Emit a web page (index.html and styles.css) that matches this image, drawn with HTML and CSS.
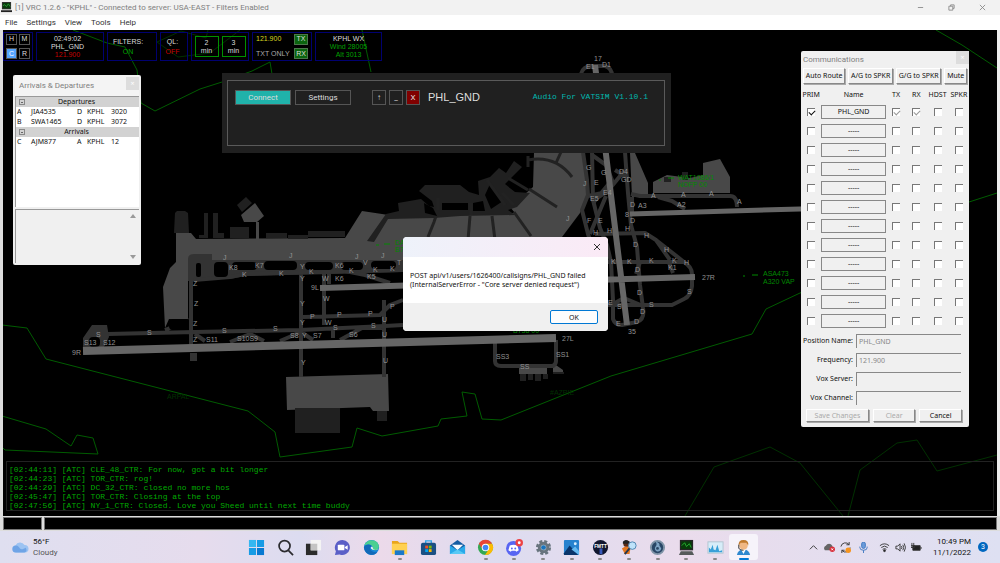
FILE: index.html
```html
<!DOCTYPE html>
<html lang="en">
<head>
<meta charset="utf-8">
<title>VRC 1.2.6</title>
<link rel="stylesheet" href="styles.css">
</head>
<body>
<div class="app">
<header class="titlebar">
  <svg class="app-icon" viewBox="0 0 12 12"><rect x="1" width="10" height="8" fill="#333"/><rect x="2" y="1" width="8" height="6" fill="#063b0b"/><path d="M2 4l2-1 2 2 2-3 2 3" stroke="#2a9a35" fill="none"/><path d="M0 9h12v2H0z" fill="#222"/></svg>
  <span class="title">[1] VRC 1.2.6 - "KPHL" - Connected to server: USA-EAST - Filters Enabled</span>
  <button class="wbtn" aria-label="Minimize"><svg viewBox="0 0 8 8"><path d="M1 4h6"/></svg></button>
  <button class="wbtn" aria-label="Restore"><svg viewBox="0 0 8 8"><path d="M1 2.500h4.500V7H1zM3 2.500V1h4v4H5.500"/></svg></button>
  <button class="wbtn" aria-label="Close"><svg viewBox="0 0 8 8"><path d="M1 1l6 6M7 1L1 7"/></svg></button>
</header>
<nav class="menu"><button>File</button><button>Settings</button><button>View</button><button>Tools</button><button>Help</button></nav>

<main class="scope">
<svg class="map" viewBox="3 30 994 486" preserveAspectRatio="xMinYMin slice">
  <g class="coast">
    <path d="M2 325L27 328 46 359 248 411 275 432 280 457 352 447 357 428 382 436 438 426 441 419 467 416 462 392 475 394 482 419 501 420 611 376 752 334 766 309 800 293 860 270"/>
    <path d="M2 416L46 429 71 446 77 435 93 438 98 454 5 450 2 447"/>
    <path d="M73 30L107 43 125 47 137 70 141 103 155 111 200 89 222 82 252 71 270 62 273 80M362 30L371 72"/>
    <path class="dim" d="M208 30L206 38 181 31 157 42 178 57 210 53 240 30"/>
    <path d="M936 30L962 45 997 68M969 202L997 193"/>
    <path class="dim" d="M685 516L714 467 770 447 800 463 843 516M848 516L860 470 897 443 917 440 937 471 997 455"/>
  </g>
  <g class="apron">
    <path d="M176 233H191L196 239 345 238 362 211 382 214 400 217 515 213 510 207 533 187 534 153H583L587 197 580 213 562 237 550 262H188V320L169 319 165 328 163 287 170 268 176 262z"/>
    <path d="M241 215L255 203 264 216 257 222H244zM256 222h3v17h-3z"/>
    <path d="M653 182L667 175 690 178 703 175V163L720 159 730 177V193H653zM630 153h5l13 30v14h-16z"/>
    <path d="M286 377L388 374 389 411H373L370 407 287 410zM519 366h28v8h-28zM553 363l10 7v3h-10z"/>
  </g>
  <g class="building">
    <path d="M175 213l2-2h8l3 2 1 20h-15zM204 213h4v25h-9v-3h5zM213 213h5v20h6v5h-11zM230 227h19v11h-19zM237 205l9-8 6 6-10 9zM266 233h21v5h-21zM288 235h20v4h-20zM308 231h37v6h-37z"/>
    <path d="M367 241L386 214 399 211 398 203 421 199 429 206 434 207 432 201 419 191 425 185H460L469 192 479 195 478 181 490 177 499 168 506 173 514 161 522 167 511 178 505 184 515 192 530 193 517 207 508 210 515 215 460 216 434 218 388 219 374 242z"/>
    <path d="M295 408h45v25h-45zM377 411h10v10h-10zM520 374h6v7h-6zM528 374h5v6h-5zM535 374h6v7h-6zM543 374h5v5h-5zM553 372h11v2h-11z"/>
    <path d="M664 177h7v5h-7zM682 172h6v8h-6z"/>
  </g>
  <g class="hole"><path d="M442 203h26v7h-26zM473 203l10-2 2 10h-12zM490 184l13 17-12 8-6-14zM509 187l3-9 10-10 6-3v24l-13 2zM424 203l9 5 4 8-12-3z"/></g>
  <g class="pier">
    <path d="M436 216L434 222 428 237M470 216L468 240M492 216L495 240M514 212L531 236M529 189L557 207M528 160C550 156 563 165 572 177M561 152L556 163M487 180L505 205M502 193L514 205M528 156v11M508 178l20 12M438 198v12M471 203v12"/>
  </g>
  <path class="dark" d="M188 259q0-5 6-5h18v24l-18 3h-6z"/>
  <path class="dark" d="M212 260H403V272L245 276 230 279 212 278z"/>
  <g class="taxi">
    <path d="M194 280L230 277 245 274 403 270M301 262V377M324 270V325M329 284V270M303 317L380 315 390 305 403 300M384 300V377"/>
    <path d="M108 334L195 332 300 330 385 326 403 325M195 334l10 7M230 342l20-8 14 7M280 341l21-9 12 8M340 340l22-12 22 0M333 330v8M345 271l20 4 25 8M165 330l25-10"/>
    <path d="M495 343V361Q495 366 501 366H553Q556 364 556 361V340"/>
    <path d="M581 74Q583 66 592 66H605Q612 68 612 76" />
    <path d="M583 152L587 180 588 195 582 210 588 234 590 240M592 152L593 200 600 228 607 245 611 262 613 300 613 319Q615 325 622 325L637 322Q645 319 643 308L640 285 637 247 631 225 628 193 625 152"/>
    <path d="M588 196L607 192 625 170M593 203L612 180 606 165 592 155M628 178L615 170M594 200L606 192"/>
    <path d="M595 234L645 233 656 240 684 262Q692 267 692 274V286Q691 296 684 299L672 305H608M608 262H685M668 260l5 13M640 262l-4 12M656 240l14 20M613 304l11-6 19 8"/>
    <path d="M631 194L640 196H730Q737 196 737 207M658 197L672 201 685 209M632 197V212M606 196L590 234"/>
  </g>
  <path class="dark" d="M83 347V338L92 325H107L109 337 104 347zM190 353h7v8h-7z"/>
  <g class="hole">
    <rect x="89" y="337" width="11" height="10" rx="4"/><rect x="169" y="319" width="22" height="11" rx="4"/>
    <rect x="196" y="263" width="5" height="14" rx="2"/><rect x="214" y="262" width="14" height="15" rx="4"/>
    <rect x="232" y="262" width="25" height="8" rx="4"/><rect x="264" y="261" width="33" height="9" rx="4"/><rect x="305" y="262" width="28" height="8" rx="4"/><rect x="341" y="262" width="22" height="8" rx="4"/><rect x="371" y="261" width="25" height="8" rx="4"/>
  </g>
  <path class="taxi" d="M191 262V352"/>
  <g class="runway">
    <path class="wide" d="M83 351L556 338"/>
    <path d="M320 288L695 277M595 65L627 325"/>
    <path class="thin" d="M630 214L800 209 860 207"/>
  </g>
  <g class="labels">
    <text x="594" y="61">17</text><text x="586" y="69">E1</text><text x="602" y="67">D1</text><text x="72" y="355">9R</text><text x="311" y="290">9L</text><text x="702" y="280">27R</text><text x="562" y="341">27L</text><text x="628" y="334">35</text>
    <text x="96" y="337">S</text><text x="84" y="345">S13</text><text x="103" y="345">S12</text><text x="147" y="335">S</text><text x="222" y="333">S</text><text x="273" y="331">S</text><text x="333" y="330">S</text><text x="371" y="328">S</text><text x="206" y="342">S11</text><text x="237" y="341">S10S9</text><text x="290" y="338">S8</text><text x="313" y="338">S7</text><text x="349" y="337">S6</text>
    <text x="193" y="286">Z</text><text x="194" y="306">Z</text><text x="193" y="326">Z</text><text x="193" y="342">Z</text>
    <text x="223" y="260">J</text><text x="289" y="258">J</text><text x="355" y="259">J</text><text x="381" y="258">J</text><text x="229" y="270">K8</text><text x="255" y="268">K7</text><text x="242" y="277">K</text><text x="279" y="276">K</text><text x="309" y="274">K</text><text x="335" y="268">K6</text><text x="335" y="281">K6</text><text x="349" y="273">K</text><text x="373" y="272">K</text><text x="367" y="279">K5</text><text x="390" y="271">K</text><text x="363" y="265">V</text><text x="397" y="265">T</text>
    <text x="300" y="269">Y</text><text x="300" y="281">Y</text><text x="300" y="306">Y</text><text x="300" y="325">Y</text><text x="302" y="338">Y</text><text x="301" y="365">Y</text><text x="322" y="281">W</text><text x="323" y="301">W</text><text x="325" y="325">W</text><text x="310" y="319">P</text><text x="337" y="317">P</text><text x="368" y="316">P</text><text x="390" y="309">P</text><text x="382" y="322">U</text><text x="382" y="337">U</text><text x="383" y="363">U</text>
    <text x="496" y="359">SS3</text><text x="520" y="369">SS</text><text x="556" y="357">SS1</text>
    <text x="586" y="170">G</text><text x="601" y="175">G</text><text x="619" y="174">D4</text><text x="621" y="182">GD</text><text x="583" y="186">J</text><text x="594" y="185">E</text><text x="603" y="195">E4</text><text x="590" y="201">E5</text><text x="566" y="221">J</text><text x="587" y="223">F</text><text x="598" y="223">E</text><text x="593" y="235">H</text><text x="607" y="233">H</text><text x="625" y="231">H</text><text x="644" y="238">H</text><text x="664" y="252">H</text><text x="684" y="265">H</text><text x="630" y="207">D</text><text x="638" y="208">A3</text><text x="677" y="207">A2</text><text x="651" y="198">A</text><text x="681" y="197">A</text><text x="709" y="196">A</text><text x="737" y="204">A</text><text x="625" y="217">8</text><text x="630" y="223">D</text>
    <text x="633" y="247">D</text><text x="611" y="264">K</text><text x="627" y="264">K</text><text x="649" y="263">K</text><text x="672" y="263">K</text><text x="635" y="272">D</text><text x="668" y="270">K1</text><text x="637" y="295">D</text><text x="687" y="294">S</text><text x="617" y="309">S</text><text x="649" y="307">S</text><text x="640" y="314">D</text><text x="634" y="324">D</text><text x="616" y="326">E</text><text x="608" y="305">E</text>
  </g>
  <g class="tracks">
    <path d="M659 180h2M668 178h6M743 276h2M752 275h6M376 245h3M384 244h6"/>
    <text x="678" y="180">WAT1086/1</text><text x="678" y="187">NOFP 00</text><text x="763" y="276">ASA473</text><text x="763" y="284">A320 VAP</text><text x="395" y="245">DAL</text><text x="395" y="252">B738</text><text x="513" y="333">B738 00</text>
    <text class="faint" x="167" y="399">ARPAL</text><text class="faint" x="550" y="395">#AZPIE</text>
  </g>
</svg>

<section class="status" aria-label="Status">
  <div class="box keys"><button>H</button><button>M</button><button class="on">C</button><button>R</button></div>
  <div class="box clock"><span>02:49:02</span><span>PHL_GND</span><span class="red">121.900</span></div>
  <div class="box filters"><span>FILTERS:</span><span class="green">ON</span></div>
  <div class="box ql"><span>QL:</span><span class="red">OFF</span></div>
  <div class="box mins"><button>2<br>min</button><button>3<br>min</button></div>
  <div class="box freq"><span class="yellow">121.900</span><button>TX</button><span class="gray">TXT ONLY</span><button>RX</button></div>
  <div class="box wx"><span>KPHL WX</span><span class="green">Wind 28005</span><span class="green">Alt 3013</span></div>
</section>

<section class="window traffic">
  <header><h2>Arrivals &amp; Departures</h2><button class="shut" aria-label="Close list">×</button></header>
  <div class="list">
    <table>
      <tr class="group"><th><button class="fold" aria-label="Collapse departures"></button></th><th colspan="4">Departures</th></tr>
      <tr><td>A</td><td>JIA4535</td><td>D</td><td>KPHL</td><td>3020</td></tr>
      <tr><td>B</td><td>SWA1465</td><td>D</td><td>KPHL</td><td>3072</td></tr>
      <tr class="group"><th><button class="fold" aria-label="Collapse arrivals"></button></th><th colspan="4">Arrivals</th></tr>
      <tr><td>C</td><td>AJM877</td><td>A</td><td>KPHL</td><td>12</td></tr>
    </table>
  </div>
  <div class="notes"><i class="up"></i><i class="down"></i></div>
</section>

<section class="afv">
  <div class="afv-frame">
    <button class="connect">Connect</button><button class="settings">Settings</button>
    <button class="sq">↑</button><button class="sq">_</button><button class="sq x">X</button>
    <span class="station">PHL_GND</span><span class="ver">Audio For VATSIM V1.10.1</span>
  </div>
</section>

<section class="window comms">
  <header><h2>Communications</h2><button class="shut" aria-label="Close communications">×</button></header>
  <div class="routes"><button>Auto Route</button><button>A/G to SPKR</button><button>G/G to SPKR</button><button>Mute</button></div>
  <table>
    <tr><th>PRIM</th><th class="name">Name</th><th>TX</th><th>RX</th><th class="w">HDST</th><th>SPKR</th></tr>
    <tr><td><input type="checkbox" aria-label="1 prim" checked></td><td><button>PHL_GND</button></td><td><input type="checkbox" aria-label="1 TX" checked disabled></td><td><input type="checkbox" aria-label="1 RX" checked disabled></td><td><input type="checkbox" aria-label="1 headset"></td><td><input type="checkbox" aria-label="1 speaker"></td></tr>
    <tr><td><input type="checkbox" aria-label="2 prim"></td><td><button>-----</button></td><td><input type="checkbox" aria-label="2 TX"></td><td><input type="checkbox" aria-label="2 RX"></td><td><input type="checkbox" aria-label="2 headset"></td><td><input type="checkbox" aria-label="2 speaker"></td></tr>
    <tr><td><input type="checkbox" aria-label="3 prim"></td><td><button>-----</button></td><td><input type="checkbox" aria-label="3 TX"></td><td><input type="checkbox" aria-label="3 RX"></td><td><input type="checkbox" aria-label="3 headset"></td><td><input type="checkbox" aria-label="3 speaker"></td></tr>
    <tr><td><input type="checkbox" aria-label="4 prim"></td><td><button>-----</button></td><td><input type="checkbox" aria-label="4 TX"></td><td><input type="checkbox" aria-label="4 RX"></td><td><input type="checkbox" aria-label="4 headset"></td><td><input type="checkbox" aria-label="4 speaker"></td></tr>
    <tr><td><input type="checkbox" aria-label="5 prim"></td><td><button>-----</button></td><td><input type="checkbox" aria-label="5 TX"></td><td><input type="checkbox" aria-label="5 RX"></td><td><input type="checkbox" aria-label="5 headset"></td><td><input type="checkbox" aria-label="5 speaker"></td></tr>
    <tr><td><input type="checkbox" aria-label="6 prim"></td><td><button>-----</button></td><td><input type="checkbox" aria-label="6 TX"></td><td><input type="checkbox" aria-label="6 RX"></td><td><input type="checkbox" aria-label="6 headset"></td><td><input type="checkbox" aria-label="6 speaker"></td></tr>
    <tr><td><input type="checkbox" aria-label="7 prim"></td><td><button>-----</button></td><td><input type="checkbox" aria-label="7 TX"></td><td><input type="checkbox" aria-label="7 RX"></td><td><input type="checkbox" aria-label="7 headset"></td><td><input type="checkbox" aria-label="7 speaker"></td></tr>
    <tr><td><input type="checkbox" aria-label="8 prim"></td><td><button>-----</button></td><td><input type="checkbox" aria-label="8 TX"></td><td><input type="checkbox" aria-label="8 RX"></td><td><input type="checkbox" aria-label="8 headset"></td><td><input type="checkbox" aria-label="8 speaker"></td></tr>
    <tr><td><input type="checkbox" aria-label="9 prim"></td><td><button>-----</button></td><td><input type="checkbox" aria-label="9 TX"></td><td><input type="checkbox" aria-label="9 RX"></td><td><input type="checkbox" aria-label="9 headset"></td><td><input type="checkbox" aria-label="9 speaker"></td></tr>
    <tr><td><input type="checkbox" aria-label="10 prim"></td><td><button>-----</button></td><td><input type="checkbox" aria-label="10 TX"></td><td><input type="checkbox" aria-label="10 RX"></td><td><input type="checkbox" aria-label="10 headset"></td><td><input type="checkbox" aria-label="10 speaker"></td></tr>
    <tr><td><input type="checkbox" aria-label="11 prim"></td><td><button>-----</button></td><td><input type="checkbox" aria-label="11 TX"></td><td><input type="checkbox" aria-label="11 RX"></td><td><input type="checkbox" aria-label="11 headset"></td><td><input type="checkbox" aria-label="11 speaker"></td></tr>
    <tr><td><input type="checkbox" aria-label="12 prim"></td><td><button>-----</button></td><td><input type="checkbox" aria-label="12 TX"></td><td><input type="checkbox" aria-label="12 RX"></td><td><input type="checkbox" aria-label="12 headset"></td><td><input type="checkbox" aria-label="12 speaker"></td></tr>
  </table>
  <div class="fields">
    <label for="pos">Position Name:</label><input id="pos" type="text" value="PHL_GND" disabled>
    <label for="frq">Frequency:</label><input id="frq" type="text" value="121.900" disabled>
    <label for="srv">Vox Server:</label><input id="srv" type="text" disabled>
    <label for="chn">Vox Channel:</label><input id="chn" type="text" disabled>
  </div>
  <div class="actions"><button class="save" disabled>Save Changes</button><button disabled>Clear</button><button>Cancel</button></div>
</section>

<section class="dialog" role="alertdialog" aria-label="Error">
  <header><button aria-label="Close message"><svg viewBox="0 0 8 8"><path d="M1 1l6 6M7 1L1 7"/></svg></button></header>
  <p>POST api/v1/users/1626400/callsigns/PHL_GND failed<br>(InternalServerError - "Core server denied request")</p>
  <footer><button>OK</button></footer>
</section>

<section class="chat" aria-label="Messages">
  <p>[02:44:11] [ATC] CLE_48_CTR: For now, got a bit longer</p>
  <p>[02:44:23] [ATC] TOR_CTR: rog!</p>
  <p>[02:44:29] [ATC] DC_32_CTR: closed no more hos</p>
  <p>[02:45:47] [ATC] TOR_CTR: Closing at the top</p>
  <p>[02:47:56] [ATC] NY_1_CTR: Closed. Love you Sheed until next time buddy</p>
</section>
</main>
<div class="command"><output></output><input type="text" aria-label="Command"></div>

<footer class="taskbar">
  <div class="weather">
    <svg viewBox="0 0 17 12"><path d="M4 11.500a3.500 3.500 0 0 1-.5-7A5 5 0 0 1 12.500 4 3.700 3.700 0 0 1 13 11.500z" fill="#9cc3f2"/><path d="M4 11.500a3.500 3.500 0 0 1 0-7c2 0 3 1.500 4 3s4 .5 5-.5 3 4-.5 4.500z" fill="#6fa4e6"/></svg>
    <div><span>56°F</span><span class="sub">Cloudy</span></div>
  </div>
  <div class="tasks">
    <button aria-label="Start"><svg viewBox="0 0 18 18"><path d="M1 1h7.500v7.500H1z" fill="#35b7f1"/><path d="M9.500 1H17v7.500H9.500zM1 9.500h7.500V17H1z" fill="#179be5"/><path d="M9.500 9.500H17V17H9.500z" fill="#0879d1"/></svg></button>
    <button aria-label="Search"><svg viewBox="0 0 18 18" fill="none" stroke="#2b2b2f" stroke-width="1.800"><circle cx="8" cy="7.500" r="5.800"/><path d="M12 12l5 5"/></svg></button>
    <button aria-label="Task view"><svg viewBox="0 0 18 18"><path d="M1 5h12v12H1z" fill="#2b2b2b"/><path d="M6 1h11v11H6z" fill="#f4f4f4"/><path d="M6 5h7v7H6z" fill="#c4c4c4"/></svg></button>
    <button aria-label="Chat"><svg viewBox="0 0 18 18"><path d="M9 1a8 8 0 1 1-3 15.500L1 17l1-4A8 8 0 0 1 9 1z" fill="#5b5fc7"/><rect x="4" y="6" width="7" height="6" rx="1" fill="#fff"/><path d="M11.500 8.500L14.500 6.500v5l-3-2z" fill="#fff"/></svg></button>
    <button aria-label="Edge"><svg viewBox="0 0 18 18"><circle cx="9" cy="9" r="8" fill="#1683d8"/><path d="M1.500 7C3 0 14-1 16.500 6c1.500 5-3 7-7 5.500C12 8 8 4 1.500 7z" fill="#4bcf91"/><path d="M1 9c1-4 8-4 8-1-3 1-2 6 6 6-4 5-13 3-14-5z" fill="#1269b8"/><path d="M8.500 8.500c-1 2 2 4 7 3l1-1c-3 2-6 1-6-1 0-1-1-2-2-1z" fill="#e7e8f5"/></svg></button>
    <button class="run" aria-label="File Explorer"><svg viewBox="0 0 18 18"><path d="M1 2h6l2 2h8v12H1z" fill="#e9a61c"/><path d="M1 5h16v11H1z" fill="#ffd152"/><path d="M4 12h10v5H4z" fill="#1a78c9"/></svg></button>
    <button aria-label="Store"><svg viewBox="0 0 18 18"><path d="M6 5V2h6v3" stroke="#32a5e8" fill="none" stroke-width="1.500"/><rect x="1" y="4" width="16" height="13" rx="2" fill="#1b5084"/><path d="M5.500 7h3v3h-3z" fill="#f25022"/><path d="M9.300 7h3v3h-3z" fill="#7fba00"/><path d="M5.500 10.800h3v3h-3z" fill="#00a4ef"/><path d="M9.300 10.800h3v3h-3z" fill="#ffb900"/></svg></button>
    <button aria-label="Mail"><svg viewBox="0 0 18 18"><path d="M1 7l8-6 8 6v9H1z" fill="#145ca3"/><path d="M3 6h12l-6 6z" fill="#f4f9fd"/><path d="M1 7l8 5 8-5v9H1z" fill="#29a9e9"/><path d="M1 16l8-5 8 5z" fill="#58c9f5"/></svg></button>
    <button class="run" aria-label="Chrome"><svg viewBox="0 0 18 18"><circle cx="9" cy="9" r="8" fill="#34a853"/><path d="M2 5a8 8 0 0 1 14 0H9L6 11z" fill="#ea4335"/><path d="M9 5h7a8 8 0 0 1-7.500 12L13 10z" fill="#fbbc04"/><circle cx="9" cy="9" r="4" fill="#fff"/><circle cx="9" cy="9" r="3" fill="#4285f4"/></svg></button>
    <button class="run" aria-label="Discord"><svg viewBox="0 0 18 18"><circle cx="8" cy="10" r="8" fill="#5865f2"/><path d="M4 7q4-2 8 0l1.500 5-2.500 1.500-1-1H6l-1 1L2.500 12z" fill="#fff"/><circle cx="6.200" cy="10" r="1" fill="#5865f2"/><circle cx="9.800" cy="10" r="1" fill="#5865f2"/><circle cx="14" cy="4" r="4" fill="#ed4245"/><circle cx="14" cy="4" r="1.500" fill="#fff"/></svg></button>
    <button class="run" aria-label="Settings"><svg viewBox="0 0 18 18"><circle cx="9" cy="9" r="6.500" fill="none" stroke="#68747e" stroke-width="3" stroke-dasharray="3.100 2"/><circle cx="9" cy="9" r="4.500" fill="#b8c2c9" stroke="#68747e" stroke-width="3"/><circle cx="9" cy="9" r="2.500" fill="#1873bd"/></svg></button>
    <button class="run" aria-label="Photos"><svg viewBox="0 0 18 18"><rect x="1" y="1" width="16" height="16" rx="1" fill="#2782ce"/><path d="M1 15l6-8 9 10H1z" fill="#0a356a"/><path d="M9 11l4-3 4 5v4z" fill="#65b9ef"/><circle cx="13" cy="5" r="1.500" fill="#d9f0ff"/></svg></button>
    <button class="run" aria-label="FMTT"><svg viewBox="0 0 18 18"><circle cx="9" cy="9" r="8" fill="#12172f"/><path d="M8 10h3v6H8z" fill="#3859ba"/><text x="9" y="9" text-anchor="middle" class="badge-text">FMTT</text></svg></button>
    <button class="run" aria-label="User search"><svg viewBox="0 0 18 18"><circle cx="6" cy="5" r="3.500" fill="#5a2b15"/><path d="M1 10q5-4 9 0l-1 6H4z" fill="#e57720"/><path d="M2 3q3-4 7 0v2H2z" fill="#222"/><circle cx="12" cy="7" r="4" fill="#bfe3fa" stroke="#4b83af"/><path d="M9 10l-5 6" stroke="#26384e" stroke-width="2"/></svg></button>
    <button class="run" aria-label="Globe"><svg viewBox="0 0 18 18"><circle cx="9" cy="9" r="7" fill="#294766" stroke="#8095a8" stroke-width="2"/><path d="M7 3q5 1 4 4l2 3q-1 4-5 3-3-2-1-5 2-2 0-5z" fill="#7fa5c4"/><circle cx="9" cy="10" r="1.500" fill="#294766"/></svg></button>
    <button class="run" aria-label="VRC"><svg viewBox="0 0 18 18"><path d="M2 1h14v11H2z" fill="#252525"/><path d="M3.500 2.500h11v8h-11z" fill="#073d09"/><path d="M4 7l3-3 2 4 3-3 2 4" stroke="#27ae33" fill="none"/><path d="M3 13h12l2 4H1z" fill="#555b5a"/></svg></button>
    <button class="run" aria-label="Monitor"><svg viewBox="0 0 18 18"><rect x="1" y="3" width="16" height="12" fill="#d7edf9" stroke="#b2c5d1"/><path d="M2 14V9l2 2 2-5 1 5 2 1 2-6 2 7 3-1v2z" fill="#38a0d8"/></svg></button>
    <button class="run active" aria-label="Audio client"><svg viewBox="0 0 18 18"><path d="M2 17q1-6 7-6t7 6z" fill="#2e88cf"/><path d="M6 10h6l-3 6z" fill="#fff"/><circle cx="9" cy="7" r="4.500" fill="#f0b783"/><path d="M4 7Q3 1 9 1t5 6L12 4H6z" fill="#c07a2c"/><path d="M4 6v4q2 2 5 2" stroke="#333" fill="none"/></svg></button>
  </div>
  <div class="tray">
    <svg viewBox="0 0 12 12"><path d="M2 8l4-4 4 4"/></svg>
    <svg viewBox="0 0 12 12"><path d="M1 9a3 3 0 0 1 1-5 4 4 0 0 1 7 0l1 5z" fill="#666" stroke="none"/><circle cx="9" cy="8" r="3" fill="#d8303c" stroke="none"/><path d="M8 7l2 2M10 7L8 9" stroke="#fff"/></svg>
    <svg viewBox="0 0 12 12"><path d="M1 5a5 5 0 0 1 9-2M10 0v3H7M11 6a5 5 0 0 1-9 3M2 12V9h3"/><circle cx="9" cy="9" r="3" fill="#f7941d" stroke="none"/></svg>
    <svg class="mic" viewBox="0 0 12 12"><rect x="4" y="0" width="4" height="7" rx="2" fill="#6b9cda"/><path d="M2 5v1q0 3 4 3t4-3V5M6 9v3"/></svg>
    <svg class="net" viewBox="0 0 12 12"><path d="M1 4q5-4 10 0M2.500 6q3.500-3 7 0M4 8q2-1.500 4 0"/><circle cx="6" cy="9.500" r="1" fill="#222"/></svg>
    <svg viewBox="0 0 12 12"><path d="M1 4.500h2L5.500 2v8L3 7.500H1zM7 4.500q1 1.500 0 3M8.500 3q2 3 0 6M10 1.500q3 4.500 0 9"/></svg>
    <svg viewBox="0 0 12 12"><path d="M2 4h8v5H2z" fill="#222"/><path d="M11 5.500v2M1 1v3M3 1v3M0 4h4v2H0z"/></svg>
    <div class="date"><span>10:49 PM</span><span>11/1/2022</span></div>
    <span class="count">3</span>
  </div>
</footer>
</div>
</body>
</html>
```
FILE: styles.css
```css
* { box-sizing: border-box; }
body { margin: 0; font: 7px/10px "Noto Sans", sans-serif; color: #111; background: #f2f2f2; }
button, input { font: inherit; color: inherit; margin: 0; padding: 0; border: 0; background: none; border-radius: 0; }
h2, p { margin: 0; font-weight: normal; }
.app { display: flex; flex-direction: column; min-height: 100vh; }
.titlebar { display: flex; align-items: center; height: 15px; background: #f2f2f2; color: #808080; font: 8px/14px Roboto, sans-serif; padding-right: 2px; }
.app-icon { width: 11px; height: 11px; margin: 0 3px 0 1px; }
.title { flex: 1; }
.wbtn { width: 31px; height: 14px; display: grid; place-items: center; }
.wbtn svg { width: 7px; height: 7px; stroke: #888; fill: none; }
.menu { display: flex; gap: 9px; padding: 0 5px; height: 15px; background: #fff; font: 8px/13px Roboto, sans-serif; color: #333; }
.scope { position: relative; flex: 1; min-height: 486px; background: #000; border-left: 3px solid #ddd; border-right: 3px solid #eee; overflow: hidden; }
.map { position: absolute; inset: 0; width: 100%; height: 100%; }
.coast { fill: none; stroke: #005c00; }
.dim { stroke: #003000; }
.apron { fill: #484848; }
.building { fill: #202020; }
.hole { fill: #000; }
.pier { fill: none; stroke: #222; stroke-width: 3; }
.dark { fill: #333; }
.taxi { fill: none; stroke: #333; stroke-width: 4; stroke-linejoin: round; }
.runway { stroke: #666; stroke-width: 6; }
.wide { stroke-width: 8; }
.thin { stroke-width: 5; fill: none; }
.labels { fill: #929292; font: 7px "Liberation Sans", sans-serif; }
.tracks { fill: #008a00; stroke: none; font: 7px "Liberation Sans", sans-serif; }
.tracks path { stroke: #008a00; }
.tracks .faint { fill: #003000; }

.status { position: relative; display: flex; gap: 3px; padding: 2px 0; font: 7px/8px "Liberation Sans", sans-serif; color: #ddd; }
.box { border: 1px solid #000070; height: 29px; display: flex; flex-direction: column; align-items: center; justify-content: center; }
.keys { width: 30px; display: grid; grid-template-columns: 11px 11px; gap: 2px; }
.keys button { height: 11px; border: 1px solid #555; }
.keys .on { background: #55a5ff; color: #fff; }
.clock { width: 68px; padding-right: 5px; }
.filters { width: 50px; padding-right: 8px; gap: 2px; }
.ql { width: 28px; padding-right: 3px; gap: 2px; }
.mins { width: 58px; flex-direction: row; gap: 3px; }
.mins button { width: 24px; height: 21px; border: 1px solid #009000; }
.freq { width: 60px; display: grid; grid-template-columns: 36px 14px; gap: 2px; }
.freq button { height: 11px; background: #0b650f; border: 1px solid #4b774b; }
.wx { width: 67px; }
.red { color: #c80000; }
.green { color: #00a000; }
.yellow { color: #d8d820; }
.gray { color: #aaa; }

.window { position: absolute; background: #f0f0f0; border-radius: 2px; font: 7px/10px "Noto Sans", sans-serif; }
.window header { display: flex; justify-content: space-between; }
.window h2 { font: 8px/17px Roboto, sans-serif; color: #808080; }
.shut { width: 13px; height: 13px; background: #ddd; color: #fff; line-height: 12px; }
.window table { border-collapse: collapse; table-layout: fixed; width: 100%; }
.window th, .window td { padding: 0; font-weight: normal; }
.traffic { left: 10px; top: 45px; width: 128px; padding: 0 2px 2px; }
.traffic header { padding: 2px 0 2px 4px; background: #f4f4f4; }
.traffic .list { height: 111px; background: #fff; border: 1px solid #999; border-width: 1px 0 0 1px; }
.traffic tr { height: 10px; }
.traffic td { padding-left: 1px; }
.traffic td:nth-child(1), .traffic th:first-child { width: 14px; }
.traffic th:first-child { text-align: left; padding-left: 3px; }
.traffic td:nth-child(2) { width: 46px; }
.traffic td:nth-child(3) { width: 10px; }
.traffic td:nth-child(4) { width: 24px; }
.traffic table { table-layout: auto; }
.group { background: #d2d2d2; }
.group th:last-child { padding-right: 16px; }
.fold { display: block; width: 6px; height: 6px; border: 1px solid #888; background: linear-gradient(#666, #666) center / 2px 1px no-repeat; }
.notes { height: 54px; margin-top: 2px; border: 1px solid #999; border-width: 1px 0 0 1px; display: flex; flex-direction: column; justify-content: space-between; align-items: flex-end; padding: 4px 3px; }
.notes i { border: 3px solid transparent; }
.notes .up { border-top: 0; border-bottom: 4px solid #999; }
.notes .down { border-bottom: 0; border-top: 4px solid #999; }

.afv { position: absolute; left: 219px; top: 43px; width: 449px; padding: 7px 6px 7px 5px; background: #202020; color: #ddd; font: 8px/12px Roboto, sans-serif; }
.afv-frame { display: flex; align-items: flex-start; height: 66px; border: 1px solid #5a5a5a; padding: 9px 16px 0 7px; }
.afv button { height: 15px; border: 1px solid #555; }
.afv .connect { width: 56px; background: #20b2aa; margin-right: 4px; }
.afv .settings { width: 56px; margin-right: 21px; }
.afv .sq { width: 14px; margin-right: 3px; }
.afv .x { background: #800000; }
.station { margin-left: 5px; font: 11px/14px "Liberation Sans", sans-serif; flex: 1; }
.ver { color: #00b8b0; font: 8px/14px "Liberation Mono", monospace; }

.comms { right: 28px; top: 21px; width: 168px; padding-bottom: 5px; }
.comms header { padding: 0 0 0 2px; }
.comms button { background: #f0f0f0; border: 1px solid #888; }
.comms .shut { background: #ddd; border: 0; }
.routes { display: flex; gap: 3px; padding: 0 2px; }
.routes button { height: 16px; flex: 1 1 auto; }
.routes button, .actions button { border-color: #fff #888 #888 #fff; box-shadow: 1px 1px #aaa; }
.comms table { margin-top: 3px; }
.comms tr { height: 19px; text-align: center; }
.comms tr:first-child { height: 15px; }
.comms th { width: 20px; }
.comms th:first-child { width: 20px; }
.comms th.name { width: 64px; }
.comms th.w { width: 22px; }
.comms td { vertical-align: middle; }
.comms td button { display: block; width: 100%; height: 14px; line-height: 12px; }
.comms [type=checkbox] { appearance: none; display: block; width: 8px; height: 8px; margin: 0 auto; background: #fff; border: 1px solid #777; border-width: 1px 0 0 1px; }
.comms [type=checkbox]:checked::after { content: ""; display: block; width: 5px; height: 3px; margin: 1px; border: 1px solid #111; border-width: 0 0 1px 1px; transform: rotate(-45deg); }
.comms [type=checkbox]:disabled::after { border-color: #999; }
.fields { display: grid; grid-template-columns: 51px 1fr; column-gap: 3px; row-gap: 5px; padding: 4px 8px 4px 1px; align-items: center; text-align: right; }
.fields label { white-space: nowrap; }
.fields input { height: 14px; width: 100%; min-width: 0; border: 1px solid #888; border-width: 1px 0 0 1px; padding-left: 2px; color: #888; }
.actions { display: flex; gap: 4px; padding: 0 7px 0 5px; }
.actions button { height: 13px; flex: 2; }
.actions .save { flex: 3; }
.actions button:disabled { color: #aaa; }

.dialog { position: absolute; left: 400px; top: 207px; width: 205px; border-radius: 4px; overflow: hidden; background: #fff; font: 7px/9px "Noto Sans", sans-serif; }
.dialog header { display: flex; justify-content: flex-end; height: 20px; padding: 6px 7px; background: linear-gradient(90deg, #eef2fa, #fbeaf6); }
.dialog header svg { display: block; width: 8px; height: 8px; stroke: #333; fill: none; }
.dialog p { padding: 14px 7px; white-space: nowrap; }
.dialog footer { display: flex; justify-content: flex-end; padding: 7px 10px; background: #f0f0f0; }
.dialog footer button { width: 48px; height: 14px; border: 1px solid #0078d4; border-radius: 2px; background: #fdfdfd; }
.chat { position: absolute; left: 3px; right: 3px; bottom: 5px; height: 50px; padding: 3px 2px 0; border: 1px solid #222; color: #00a800; font: 8px/9px "Liberation Mono", monospace; }

.command { display: flex; gap: 2px; padding: 1px 3px; height: 15px; background: #ddd; }
.command output { width: 39px; background: #000; border: 1px solid #777; }
.command input { flex: 1; background: #000; border: 1px solid #777; }
.taskbar { display: grid; grid-template-columns: 1fr 516px 1fr; height: 32px; background: linear-gradient(90deg, #dfdff0, #e6dced 20%, #dcdcf0 30%, #ecdaea 38%, #dddcf0 50%, #eadcec 68%, #dee0f2); font: 8px/11px Roboto, sans-serif; }
.weather { display: flex; align-items: center; gap: 4px; padding-left: 12px; }
.weather svg { width: 17px; height: 12px; }
.weather span, .date span { display: block; }
.weather .sub { color: #555; }
.tasks { display: flex; align-items: center; }
.tasks button { flex: 1; height: 26px; display: flex; flex-direction: column; align-items: center; justify-content: center; position: relative; }
.tasks svg { width: 17px; height: 17px; }
.tasks .run::after { content: ""; position: absolute; bottom: 0; width: 4px; height: 2px; border-radius: 1px; background: #888; }
.tasks .active { background: #f6f3fa; border-radius: 3px; }
.tasks .active::after { width: 10px; background: #0078d4; }
.badge-text { font: bold 5px "Liberation Sans", sans-serif; fill: #fff; }
.tray { display: flex; align-items: center; justify-content: flex-end; gap: 5px; padding-right: 12px; }
.tray svg { width: 11px; height: 11px; fill: none; stroke: #333; }
.tray .mic { stroke: #3c76bf; margin-left: 2px; }
.tray .net { margin-left: 5px; }
.date { text-align: right; margin-left: 6px; }
.count { width: 10px; height: 10px; border-radius: 50%; background: #0067c0; color: #fff; text-align: center; font-size: 7px; line-height: 10px; margin-left: 2px; }
```
